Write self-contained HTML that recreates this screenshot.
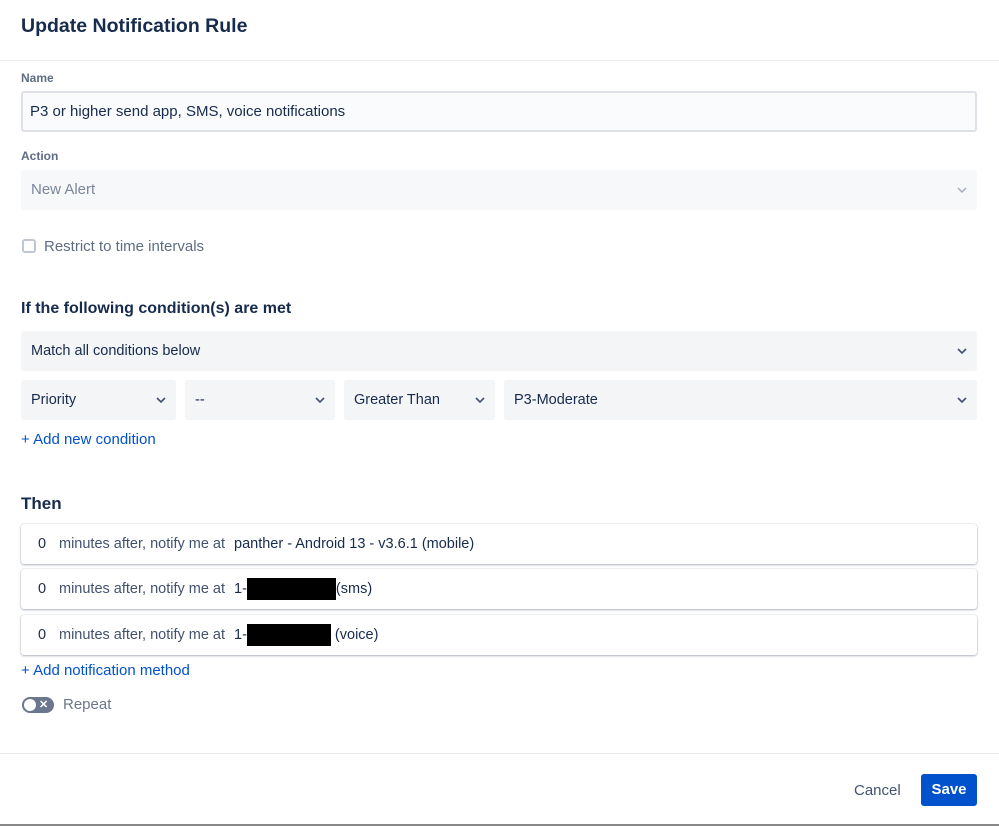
<!DOCTYPE html>
<html><head><style>
*{box-sizing:border-box;margin:0;padding:0}
body{width:999px;height:826px;background:#fff;font-family:"Liberation Sans",sans-serif;color:#172b4d;position:relative;overflow:hidden}
.abs{position:absolute}
.lbl{font-size:12px;font-weight:bold;color:#5e6c84}
.sel{position:absolute;background:#f4f5f7;border-radius:3px;height:40px;font-size:14.5px;line-height:40px;padding-left:10px;color:#172b4d}
.sel svg{position:absolute;right:10px;top:15px}
.row{position:absolute;left:21px;width:956px;height:40px;background:#fff;border-radius:3px;box-shadow:0 1px 2px rgba(9,30,66,.3),0 0 1px rgba(9,30,66,.3);font-size:14.5px;line-height:40px}
.row .z{position:absolute;left:17px}
.row .m{position:absolute;left:38px;color:#42526e}
.row .v{position:absolute;left:213px}
.blk{display:inline-block;background:#000;height:22px;vertical-align:middle}
.link{color:#0052cc;font-size:15px}
</style></head><body>
<div class="abs" style="left:21px;top:15px;font-size:19.5px;font-weight:bold">Update Notification Rule</div>
<div class="abs" style="left:0;top:60px;width:999px;border-top:1px solid #ebecf0"></div>
<div class="abs lbl" style="left:21px;top:71px">Name</div>
<div class="abs" style="left:21px;top:91px;width:956px;height:41px;background:#fafbfc;border:2px solid #dfe1e6;border-radius:3px;font-size:15px;line-height:37px;padding-left:7px">P3 or higher send app, SMS, voice notifications</div>
<div class="abs lbl" style="left:21px;top:149px">Action</div>
<div class="sel" style="left:21px;top:170px;width:956px;color:#7a869a;background:#f7f8f9;font-size:15px">New Alert<svg width="10" height="10" viewBox="0 0 10 10"><path d="M1 3l4 4 4-4" stroke="#a5adba" stroke-width="1.5" fill="none"/></svg></div>
<div class="abs" style="left:22px;top:239px;width:14px;height:14px;border:2px solid #c1c7d0;border-radius:3px"></div>
<div class="abs" style="left:44px;top:238px;font-size:15px;color:#5e6c84">Restrict to time intervals</div>
<div class="abs" style="left:21px;top:300px;font-size:16px;font-weight:bold">If the following condition(s) are met</div>
<div class="sel" style="left:21px;top:331px;width:956px">Match all conditions below<svg width="10" height="10" viewBox="0 0 10 10"><path d="M1 3l4 4 4-4" stroke="#42526e" stroke-width="1.6" fill="none"/></svg></div>
<div class="sel" style="left:21px;top:380px;width:155px">Priority<svg width="10" height="10" viewBox="0 0 10 10"><path d="M1 3l4 4 4-4" stroke="#42526e" stroke-width="1.6" fill="none"/></svg></div>
<div class="sel" style="left:185px;top:380px;width:150px">--<svg width="10" height="10" viewBox="0 0 10 10"><path d="M1 3l4 4 4-4" stroke="#42526e" stroke-width="1.6" fill="none"/></svg></div>
<div class="sel" style="left:344px;top:380px;width:151px">Greater Than<svg width="10" height="10" viewBox="0 0 10 10"><path d="M1 3l4 4 4-4" stroke="#42526e" stroke-width="1.6" fill="none"/></svg></div>
<div class="sel" style="left:504px;top:380px;width:473px">P3-Moderate<svg width="10" height="10" viewBox="0 0 10 10"><path d="M1 3l4 4 4-4" stroke="#42526e" stroke-width="1.6" fill="none"/></svg></div>
<div class="abs link" style="left:21px;top:431px">+ Add new condition</div>
<div class="abs" style="left:21px;top:494px;font-size:17px;font-weight:bold">Then</div>
<div class="row" style="top:524px"><span class="z">0</span><span class="m">minutes after, notify me at</span><span class="v">panther - Android 13 - v3.6.1 (mobile)</span></div>
<div class="row" style="top:569px"><span class="z">0</span><span class="m">minutes after, notify me at</span><span class="v">1-<span class="blk" style="width:89px"></span>(sms)</span></div>
<div class="row" style="top:615px"><span class="z">0</span><span class="m">minutes after, notify me at</span><span class="v">1-<span class="blk" style="width:84px"></span> (voice)</span></div>
<div class="abs link" style="left:21px;top:662px">+ Add notification method</div>
<div class="abs" style="left:22px;top:697px;width:32px;height:16px;border-radius:8px;background:#6b778c"></div>
<div class="abs" style="left:24px;top:699px;width:12px;height:12px;border-radius:6px;background:#fff"></div>
<div class="abs" style="left:39px;top:697px;color:#fff;font-size:11px;font-weight:bold;line-height:16px">✕</div>
<div class="abs" style="left:63px;top:696px;font-size:15px;color:#6b778c">Repeat</div>
<div class="abs" style="left:0;top:753px;width:999px;border-top:1px solid #ebecf0"></div>
<div class="abs" style="left:854px;top:782px;font-size:15px;color:#42526e">Cancel</div>
<div class="abs" style="left:921px;top:774px;width:56px;height:32px;background:#0052cc;border-radius:3px;color:#fff;font-size:15px;font-weight:bold;line-height:32px;text-align:center">Save</div>
<div class="abs" style="left:0;top:824px;width:999px;height:2px;background:#888"></div>
</body></html>
